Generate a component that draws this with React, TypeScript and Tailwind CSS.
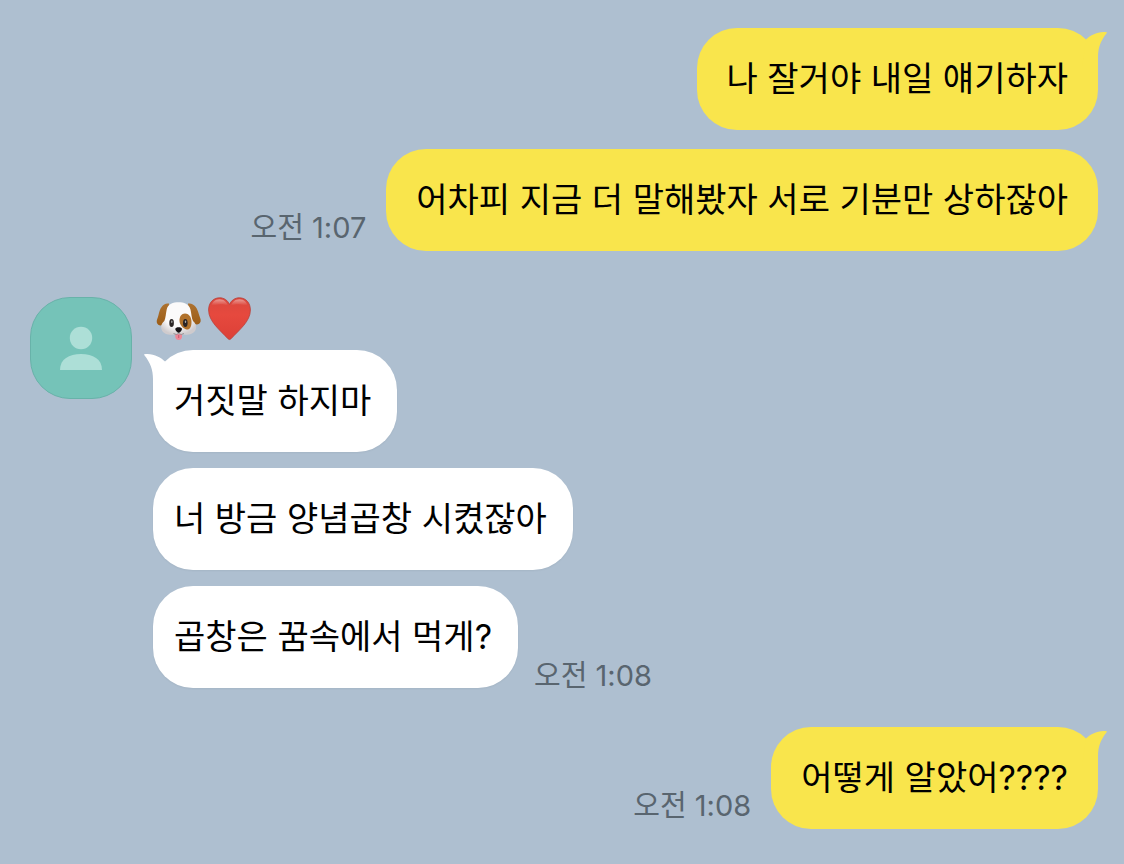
import clsx from "clsx";
import type { ReactNode } from "react";

type Message = {
  text: string;
  time?: string;
  tail?: boolean;
};

const firstSent: Message[] = [
  { text: "나 잘거야 내일 얘기하자", tail: true },
  { text: "어차피 지금 더 말해봤자 서로 기분만 상하잖아", time: "오전 1:07" },
];

const received: Message[] = [
  { text: "거짓말 하지마", tail: true },
  { text: "너 방금 양념곱창 시켰잖아" },
  { text: "곱창은 꿈속에서 먹게?", time: "오전 1:08" },
];

const lastSent: Message[] = [
  { text: "어떻게 알았어????", time: "오전 1:08", tail: true },
];

const Tail = ({ mine }: { mine: boolean }) => (
  <svg
    viewBox="0 0 30 40"
    aria-hidden="true"
    className={clsx(
      "absolute top-0 h-10 w-[30px]",
      mine ? "-right-3 fill-[#f9e54c]" : "-left-3 -scale-x-100 fill-white"
    )}
  >
    <path d="M6 11.5C10 7.5 18 3 26.500 4.200C27.200 4.300 27 4.800 26.600 5.300C20.500 13 18 20 18 29V40H2Z" />
  </svg>
);

const Bubble = ({ message, mine }: { message: Message; mine: boolean }) => (
  <li className={clsx("flex items-end", mine ? "flex-row-reverse gap-5" : "gap-4")}>
    <p
      className={clsx(
        "relative rounded-[40px] py-[26px] text-[34px] leading-[50px] text-black",
        mine ? "bg-[#f9e54c] px-[30px]" : "bg-white pr-[26px] pl-[21px] shadow-xs"
      )}
    >
      {message.tail && <Tail mine={mine} />}
      <span className="relative">{message.text}</span>
    </p>
    {message.time && (
      <time
        className={clsx(
          "shrink-0 text-[29px] leading-8 text-[#59656f]",
          mine ? "pb-[7px]" : "-mb-1"
        )}
      >
        {message.time}
      </time>
    )}
  </li>
);

const SentGroup = ({ messages }: { messages: Message[] }) => (
  <ul className="flex flex-col gap-[19px]">
    {messages.map((message) => (
      <Bubble key={message.text} message={message} mine />
    ))}
  </ul>
);

const Avatar = () => (
  <div className="flex size-[102px] shrink-0 items-center justify-center rounded-[40px] border border-[#68b2a9] bg-[#75c3b8]">
    <svg viewBox="0 0 44 44" className="size-11 fill-[#addfd7]" role="img" aria-label="프로필">
      <circle cx="22" cy="12" r="11.200" />
      <path d="M1 44C1 33 10 28 22 28S43 33 43 44Z" />
    </svg>
  </div>
);

const Dog = () => (
  <svg viewBox="0 0 44 44" className="size-11 overflow-visible" role="img" aria-label="강아지">
    <defs>
      <radialGradient id="dog-face" cx="0.48" cy="0.38" r="0.62">
        <stop offset="0.6" stopColor="#fbfafa" />
        <stop offset="1" stopColor="#cfcbcd" />
      </radialGradient>
      <linearGradient id="dog-ear" x1="0" y1="0" x2="0" y2="1">
        <stop offset="0" stopColor="#ad7230" />
        <stop offset="1" stopColor="#9c5d16" />
      </linearGradient>
    </defs>
    <path d="M18.300 36H25V40Q24.500 43 21.700 43Q18.800 43 18.300 40Z" fill="#ee8796" />
    <path d="M21.700 38V41" stroke="#c95872" strokeWidth="1" />
    <path
      d="M12 6.500C6 5.500 3 11 1.500 18C1 21-.8 23-.2 25.500C.8 29 5.500 29.500 7.500 26C10 21 12 13 12 6.500Z"
      fill="url(#dog-ear)"
    />
    <path
      d="M31 6.500C37 5.500 40.500 11 41.800 17C42.500 20 44.200 22 43.600 24.500C42.600 28 38 28.500 36 25C33 20 31 13 31 6.500Z"
      fill="url(#dog-ear)"
    />
    <path
      d="M21.600 5.300C27 5.300 32 7 33.500 12.500C34.500 17 34.500 21 36 24C39 26.500 40 30 38.500 33C36 38 29 38.500 21.700 37C14 38.500 7 38 4.800 33C3.300 30 4.300 26.500 7.300 24C8.800 21 8.700 17 9.700 12.500C11 7 16 5.300 21.600 5.300Z"
      fill="url(#dog-face)"
    />
    <path
      d="M28 16.500C32.500 16.500 34.500 21 34.500 25C34.500 30 32.500 33 29.500 32.500C26 31.500 22.500 28 22.500 23.500C22.500 19.500 24.500 16.500 28 16.500Z"
      fill="#b1722b"
    />
    <ellipse cx="14.600" cy="26" rx="2.300" ry="3.900" fill="#2b2525" />
    <ellipse cx="28.300" cy="26" rx="2.300" ry="3.900" fill="#2b2525" />
    <ellipse cx="14.800" cy="24.800" rx=".7" ry="1.200" fill="#aaa" />
    <ellipse cx="28.500" cy="24.800" rx=".7" ry="1.200" fill="#aaa" />
    <path
      d="M18.300 32C18.300 29.700 25 29.700 25 32C25 33.800 22.700 35.800 21.700 35.800S18.300 33.800 18.300 32Z"
      fill="#161214"
    />
    <path
      d="M16.500 36.500Q19.500 38.500 21.700 36.500Q24 38.500 27 36.500"
      fill="none"
      stroke="#8b8386"
      strokeWidth=".8"
    />
  </svg>
);

const Heart = () => (
  <svg viewBox="0 0 44 44" className="size-11" role="img" aria-label="하트">
    <defs>
      <linearGradient id="heart-fill" x1="0" y1="0" x2="0" y2="1">
        <stop offset="0" stopColor="#d9483e" />
        <stop offset="0.4" stopColor="#e6493e" />
        <stop offset="1" stopColor="#dc4037" />
      </linearGradient>
      <linearGradient id="heart-shine" x1="0" y1="0" x2="0" y2="1">
        <stop offset="0" stopColor="#fff" stopOpacity="0.45" />
        <stop offset="0.7" stopColor="#fff" stopOpacity="0" />
      </linearGradient>
    </defs>
    <path
      d="M21.500 7.500C19.500 3 16 .8 11.500 .8C5 .8 .6 6 .6 13C.6 24.500 12 33 20 41.800Q21.500 43.300 23 41.800C31 33 42.400 24.500 42.400 13C42.400 6 38 .8 31.500 .8C27 .8 23.500 3 21.500 7.500Z"
      fill="url(#heart-fill)"
      stroke="#b9403a"
      strokeWidth=".8"
    />
    <path d="M3 11C3.500 5.500 7 2.200 11.500 2.200S19 5 20 9C15 6.500 8 6.500 3 11Z" fill="url(#heart-shine)" />
    <path d="M40 11C39.500 5.500 36 2.200 31.500 2.200S24 5 23 9C28 6.500 35 6.500 40 11Z" fill="url(#heart-shine)" />
  </svg>
);

const Sender = ({ children }: { children: ReactNode }) => (
  <h2 className="mb-[9px] flex gap-[7px] pl-1">{children}</h2>
);

const App = () => {
  return (
    <main className="flex min-h-screen flex-col bg-[#aebfd0] pt-7 pr-[26px] pb-8 pl-[30px] font-['Inter','Noto_Sans_CJK_KR',sans-serif]">
      <SentGroup messages={firstSent} />

      <section className="mt-[46px] mb-[39px] flex items-start gap-[21px]">
        <Avatar />
        <div>
          <Sender>
            <Dog />
            <Heart />
          </Sender>
          <ul className="flex flex-col gap-4">
            {received.map((message) => (
              <Bubble key={message.text} message={message} mine={false} />
            ))}
          </ul>
        </div>
      </section>

      <SentGroup messages={lastSent} />
    </main>
  );
};

export default App;
